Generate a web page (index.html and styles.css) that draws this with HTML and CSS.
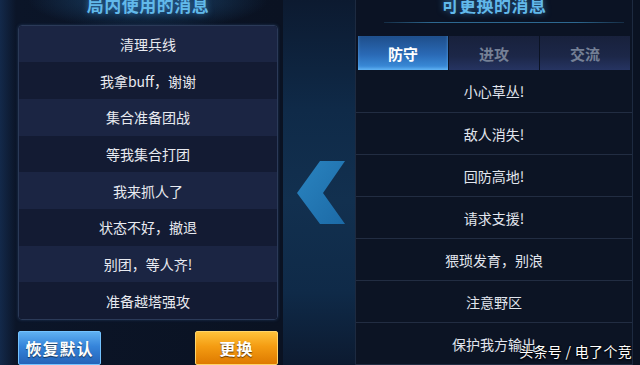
FILE: index.html
```html
<!DOCTYPE html>
<html lang="zh">
<head>
<meta charset="utf-8">
<link rel="stylesheet" href="styles.css">
</head>
<body>
<div class="screen">
  <div class="left">
    <div class="title">局内使用的消息</div>
    <div class="panel">
      <div class="row">清理兵线</div>
      <div class="row">我拿buff，谢谢</div>
      <div class="row">集合准备团战</div>
      <div class="row">等我集合打团</div>
      <div class="row">我来抓人了</div>
      <div class="row">状态不好，撤退</div>
      <div class="row">别团，等人齐!</div>
      <div class="row">准备越塔强攻</div>
    </div>
    <div class="buttons">
      <div class="btn btn-blue">恢复默认</div>
      <div class="btn btn-orange">更换</div>
    </div>
  </div>
  <div class="middle">
    <div class="mid-band">
      <svg class="chevron" width="50" height="64" viewBox="0 0 50 64">
        <defs>
          <linearGradient id="cg" x1="0" y1="0" x2="1" y2="1">
            <stop offset="0" stop-color="#2a84c0"/>
            <stop offset="1" stop-color="#1c6aa6"/>
          </linearGradient>
        </defs>
        <polygon points="23,0 48,0 26,32 48,63 23,63 0,32" fill="url(#cg)"/>
      </svg>
    </div>
  </div>
  <div class="right">
    <div class="rtitle">
      <div class="rtitle-text">可更换的消息</div>
      <div class="rtitle-line"></div>
    </div>
    <div class="tabs">
      <div class="tab active">防守</div>
      <div class="tab">进攻</div>
      <div class="tab">交流</div>
    </div>
    <div class="list">
      <div class="item first">小心草丛!</div>
      <div class="item">敌人消失!</div>
      <div class="item">回防高地!</div>
      <div class="item">请求支援!</div>
      <div class="item">猥琐发育，别浪</div>
      <div class="item">注意野区</div>
      <div class="item">保护我方输出</div>
    </div>
  </div>
  <div class="watermark">头条号 / 电了个竞</div>
</div>
</body>
</html>
```
FILE: styles.css
```css
html, body {
  margin: 0;
  padding: 0;
}
* {
  box-sizing: border-box;
}
body {
  width: 640px;
  height: 365px;
  overflow: hidden;
  background: #0a1120;
  font-family: "Noto Sans CJK SC", "Noto Sans", sans-serif;
}
.screen {
  position: relative;
  width: 640px;
  height: 365px;
  display: flex;
  background:
    radial-gradient(ellipse 120px 30px at 148px 0px, rgba(40,110,170,0.55), rgba(0,0,0,0)),
    radial-gradient(ellipse 120px 30px at 495px 0px, rgba(40,110,170,0.45), rgba(0,0,0,0)),
    linear-gradient(90deg, #13294a 0px, #0b1528 16px, #0a1222 280px, #0a1222 640px);
  overflow: hidden;
}
.left {
  width: 260px;
  margin-left: 18px;
  display: flex;
  flex-direction: column;
  flex-shrink: 0;
}
.title {
  height: 25px;
  margin-top: -5px;
  font-size: 17px;
  line-height: 19px;
  font-weight: bold;
  color: #62b9ea;
  text-align: center;
  text-shadow: 0 0 6px rgba(70,160,230,0.6);
  letter-spacing: 0.5px;
}
.panel {
  margin-top: 5px;
  height: 297px;
  border: 1px solid #2b3a58;
  border-radius: 4px;
  overflow: hidden;
  display: flex;
  flex-direction: column;
  box-shadow: 0 0 3px rgba(60,100,160,0.4);
}
.row {
  flex: 1;
  display: flex;
  align-items: center;
  justify-content: center;
  font-size: 14px;
  color: #e8eaf0;
  background: #131b33;
}
.row:nth-child(odd) {
  background: #1b2543;
}
.buttons {
  margin-top: 11px;
  display: flex;
  justify-content: space-between;
}
.btn {
  width: 83px;
  height: 34px;
  display: flex;
  align-items: center;
  justify-content: center;
  font-size: 16px;
  font-weight: bold;
  color: #ffffff;
  border-radius: 2px;
  text-shadow: 0 1px 1px rgba(0,0,0,0.6);
  letter-spacing: 1px;
}
.btn-blue {
  background: linear-gradient(180deg, #5fb0f2 0%, #3584da 45%, #2463b8 100%);
  border: 1px solid #73c2ff;
}
.btn-orange {
  background: linear-gradient(180deg, #ffc23a 0%, #f49c12 45%, #de7a00 100%);
  border: 1px solid #ffd46a;
}
.middle {
  width: 77px;
  flex-shrink: 0;
  display: flex;
  padding-left: 5px;
}
.mid-band {
  flex: 1;
  display: flex;
  align-items: center;
  justify-content: center;
  background: linear-gradient(180deg, #0c1a30 0%, #0f2a48 30%, #12304f 55%, #0f2a48 80%, #0c1a30 100%);
}
.chevron {
  margin-left: 6px;
  margin-top: 20px;
}
.right {
  width: 278px;
  flex-shrink: 0;
  border-left: 1px solid #1d2a40;
  border-right: 1px solid #1d2a40;
  display: flex;
  flex-direction: column;
  background: #0b1324;
}
.rtitle {
  height: 37px;
  display: flex;
  flex-direction: column;
}
.rtitle-text {
  margin-top: -5px;
  font-size: 17px;
  line-height: 19px;
  font-weight: bold;
  color: #62b9ea;
  text-shadow: 0 0 6px rgba(70,160,230,0.6);
  letter-spacing: 0.5px;
  text-align: center;
}
.rtitle-line {
  margin: 8px 8px 0 28px;
  height: 1px;
  background: linear-gradient(90deg, rgba(45,104,144,0.3), #2d6890 20%, #2d6890 80%, rgba(45,104,144,0.3));
}
.tabs {
  display: flex;
  height: 34px;
  padding: 0 2px;
  gap: 1px;
}
.tab {
  flex: 1;
  display: flex;
  align-items: center;
  justify-content: center;
  font-size: 15px;
  font-weight: bold;
  color: #758096;
  background: linear-gradient(180deg, #18213c 0%, #1c2748 60%, #263462 100%);
}
.tab.active {
  color: #ffffff;
  background: linear-gradient(180deg, #1e4e8a 0%, #2a6ab6 55%, #3d92e0 100%);
  box-shadow: inset 0 -2px 3px rgba(120,200,255,0.6);
}
.list {
  display: flex;
  flex-direction: column;
}
.item {
  height: 42px;
  display: flex;
  align-items: center;
  justify-content: center;
  font-size: 14px;
  color: #e2e6ee;
  border-bottom: 1px solid #222d42;
  background: #0c1424;
}
.item.first {
  height: 43px;
}
.watermark {
  position: absolute;
  right: 8px;
  bottom: 4px;
  font-size: 14px;
  letter-spacing: 0.3px;
  color: #ffffff;
  text-shadow: 0 0 2px #000, 0 1px 2px #000;
}
```
